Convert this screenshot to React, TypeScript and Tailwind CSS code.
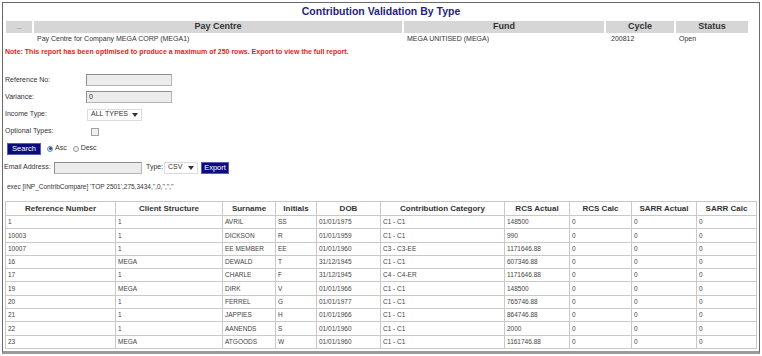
import React from 'react';

interface Row {
    ref: string;
    client: string;
    surname: string;
    initials: string;
    dob: string;
    category: string;
    rcsActual: string;
}

const rows: Row[] = [
    { ref: '1', client: '1', surname: 'AVRIL', initials: 'SS', dob: '01/01/1975', category: 'C1 - C1', rcsActual: '148500' },
    { ref: '10003', client: '1', surname: 'DICKSON', initials: 'R', dob: '01/01/1959', category: 'C1 - C1', rcsActual: '990' },
    { ref: '10007', client: '1', surname: 'EE MEMBER', initials: 'EE', dob: '01/01/1960', category: 'C3 - C3-EE', rcsActual: '1171646.88' },
    { ref: '16', client: 'MEGA', surname: 'DEWALD', initials: 'T', dob: '31/12/1945', category: 'C1 - C1', rcsActual: '607346.88' },
    { ref: '17', client: '1', surname: 'CHARLE', initials: 'F', dob: '31/12/1945', category: 'C4 - C4-ER', rcsActual: '1171646.88' },
    { ref: '19', client: 'MEGA', surname: 'DIRK', initials: 'V', dob: '01/01/1966', category: 'C1 - C1', rcsActual: '148500' },
    { ref: '20', client: '1', surname: 'FERREL', initials: 'G', dob: '01/01/1977', category: 'C1 - C1', rcsActual: '765746.88' },
    { ref: '21', client: '1', surname: 'JAPPIES', initials: 'H', dob: '01/01/1966', category: 'C1 - C1', rcsActual: '864746.88' },
    { ref: '22', client: '1', surname: 'AANENDS', initials: 'S', dob: '01/01/1960', category: 'C1 - C1', rcsActual: '2000' },
    { ref: '23', client: 'MEGA', surname: 'ATGOODS', initials: 'W', dob: '01/01/1960', category: 'C1 - C1', rcsActual: '1161746.88' },
];

const columns = [
    { label: 'Reference Number', width: 'w-[110px]' },
    { label: 'Client Structure', width: 'w-[107px]' },
    { label: 'Surname', width: 'w-[53px]' },
    { label: 'Initials', width: 'w-[41px]' },
    { label: 'DOB', width: 'w-[64px]' },
    { label: 'Contribution Category', width: 'w-[124px]' },
    { label: 'RCS Actual', width: 'w-[65px]' },
    { label: 'RCS Calc', width: 'w-[62px]' },
    { label: 'SARR Actual', width: 'w-[65px]' },
    { label: 'SARR Calc', width: 'w-[60px]' },
];

function Caret() {
    return (
        <svg width="6" height="4" viewBox="0 0 6 4" className="ml-auto">
            <path d="M0 0 L6 0 L3 4 Z" fill="#333" />
        </svg>
    );
}

function TextBox({ value, width }: { value?: string; width: string }) {
    return (
        <div className={`${width} h-[12px] bg-[#ececec] border border-[#b5b5b5] border-t-[#8f8f8f] border-l-[#8f8f8f] text-[7px] leading-[10px] pl-[2px] text-[#333]`}>
            {value}
        </div>
    );
}

function NavyButton({ children, width }: { children: React.ReactNode; width: string }) {
    return (
        <div className={`${width} h-[12px] bg-[#0c0c7e] border border-[#5b5bb0] text-white text-[7.5px] leading-[10px] flex items-center justify-center`}>
            {children}
        </div>
    );
}

export default function App() {
    return (
        <div className="w-[762px] h-[356px] bg-white pt-[2px] pl-[2px] font-['Liberation_Sans',Arial,sans-serif] overflow-hidden">
            <div className="w-[758px] h-[352px] border border-[#6a6a6a] border-b-[3px] border-b-[#9a9a9a] overflow-hidden">
                <div className="h-[17px] flex items-center justify-center text-[10.5px] font-bold text-[#1f1f80]">
                    Contribution Validation By Type
                </div>

                {/* pay centre header */}
                <div className="mt-[1px] ml-[3px] flex gap-[2px] h-[12px] text-[9px] font-bold text-[#333]">
                    <div className="w-[26px] bg-[#d6d6d6] flex items-center justify-center text-[#999] text-[6px]">...</div>
                    <div className="w-[368px] bg-[#d6d6d6] flex items-center justify-center">Pay Centre</div>
                    <div className="w-[200px] bg-[#d6d6d6] flex items-center justify-center">Fund</div>
                    <div className="w-[68px] bg-[#d6d6d6] flex items-center justify-center">Cycle</div>
                    <div className="w-[72px] bg-[#d6d6d6] flex items-center justify-center">Status</div>
                </div>
                <div className="ml-[3px] flex gap-[2px] h-[12px] items-center text-[7px] text-[#333]">
                    <div className="w-[26px]" />
                    <div className="w-[368px] pl-[3px]">Pay Centre for Company MEGA CORP (MEGA1)</div>
                    <div className="w-[200px] pl-[3px]">MEGA UNITISED (MEGA)</div>
                    <div className="w-[68px] pl-[5px]">200812</div>
                    <div className="w-[72px] pl-[3px]">Open</div>
                </div>
                <div className="mt-[1px] h-[12px] flex items-center pl-[2px] text-[7px] font-bold text-[#e11d1d]">
                    Note: This report has been optimised to produce a maximum of 250 rows. Export to view the full report.
                </div>

                {/* filters */}
                <div className="mt-[13px] text-[7px] text-[#333]">
                    <div className="h-[18px] flex items-center">
                        <div className="w-[83px] pl-[2px]">Reference No:</div>
                        <TextBox width="w-[86px]" />
                    </div>
                    <div className="h-[16px] flex items-center">
                        <div className="w-[83px] pl-[2px]">Variance:</div>
                        <TextBox width="w-[86px]" value="0" />
                    </div>
                    <div className="h-[19px] flex items-center">
                        <div className="w-[84px] pl-[2px]">Income Type:</div>
                        <div className="w-[55px] h-[12px] border border-[#dcdcdc] bg-white flex items-center px-[3px] text-[7px]">
                            ALL TYPES
                            <Caret />
                        </div>
                    </div>
                    <div className="h-[15px] flex items-center">
                        <div className="w-[88px] pl-[2px]">Optional Types:</div>
                        <div className="w-[8px] h-[8px] border border-[#a0a0a0] bg-[#f0f0f0]" />
                    </div>
                    <div className="h-[19px] flex items-center pl-[4px]">
                        <NavyButton width="w-[34px]">Search</NavyButton>
                        <div className="ml-[6px] w-[6px] h-[6px] rounded-full border border-[#6d8eb0] bg-[#dde8f3] flex items-center justify-center">
                            <div className="w-[3px] h-[3px] rounded-full bg-[#2c4f78]" />
                        </div>
                        <span className="ml-[2px]">Asc</span>
                        <div className="ml-[6px] w-[6px] h-[6px] rounded-full border border-[#9a9a9a] bg-[#f2f2f2]" />
                        <span className="ml-[2px]">Desc</span>
                    </div>
                    <div className="h-[19px] flex items-center">
                        <div className="w-[51px] pl-[1px]">Email Address:</div>
                        <TextBox width="w-[88px]" />
                        <span className="ml-[4px] w-[18px]">Type:</span>
                        <div className="w-[34px] h-[12px] border border-[#dcdcdc] bg-white flex items-center px-[3px] text-[7px]">
                            CSV
                            <Caret />
                        </div>
                        <div className="ml-[3px]">
                            <NavyButton width="w-[28px]">Export</NavyButton>
                        </div>
                    </div>
                    <div className="mt-[3px] h-[14px] flex items-center pl-[4px] text-[6.5px]">
                        exec [INP_ContribCompare] 'TOP 2501',275,3434,'',0,'','',''
                    </div>
                </div>

                {/* results */}
                <table className="mt-[7px] ml-[2px] border-collapse border border-[#a8a8a8] table-fixed w-[751px]">
                    <thead>
                        <tr className="h-[14px]">
                            {columns.map(col => (
                                <th key={col.label} className={`${col.width} border border-[#c9c9c9] text-[8px] font-bold text-[#333] text-center p-0`}>
                                    {col.label}
                                </th>
                            ))}
                        </tr>
                    </thead>
                    <tbody>
                        {rows.map(row => (
                            <tr key={row.ref} className="h-[13.3px] text-[6.5px] text-[#444]">
                                <td className="border border-[#c9c9c9] pl-[2px] p-0">{row.ref}</td>
                                <td className="border border-[#c9c9c9] pl-[2px] p-0">{row.client}</td>
                                <td className="border border-[#c9c9c9] pl-[2px] p-0">{row.surname}</td>
                                <td className="border border-[#c9c9c9] pl-[2px] p-0">{row.initials}</td>
                                <td className="border border-[#c9c9c9] pl-[2px] p-0">{row.dob}</td>
                                <td className="border border-[#c9c9c9] pl-[2px] p-0">{row.category}</td>
                                <td className="border border-[#c9c9c9] pl-[2px] p-0">{row.rcsActual}</td>
                                <td className="border border-[#c9c9c9] pl-[2px] p-0">0</td>
                                <td className="border border-[#c9c9c9] pl-[2px] p-0">0</td>
                                <td className="border border-[#c9c9c9] pl-[2px] p-0">0</td>
                            </tr>
                        ))}
                    </tbody>
                </table>
            </div>
        </div>
    );
}
